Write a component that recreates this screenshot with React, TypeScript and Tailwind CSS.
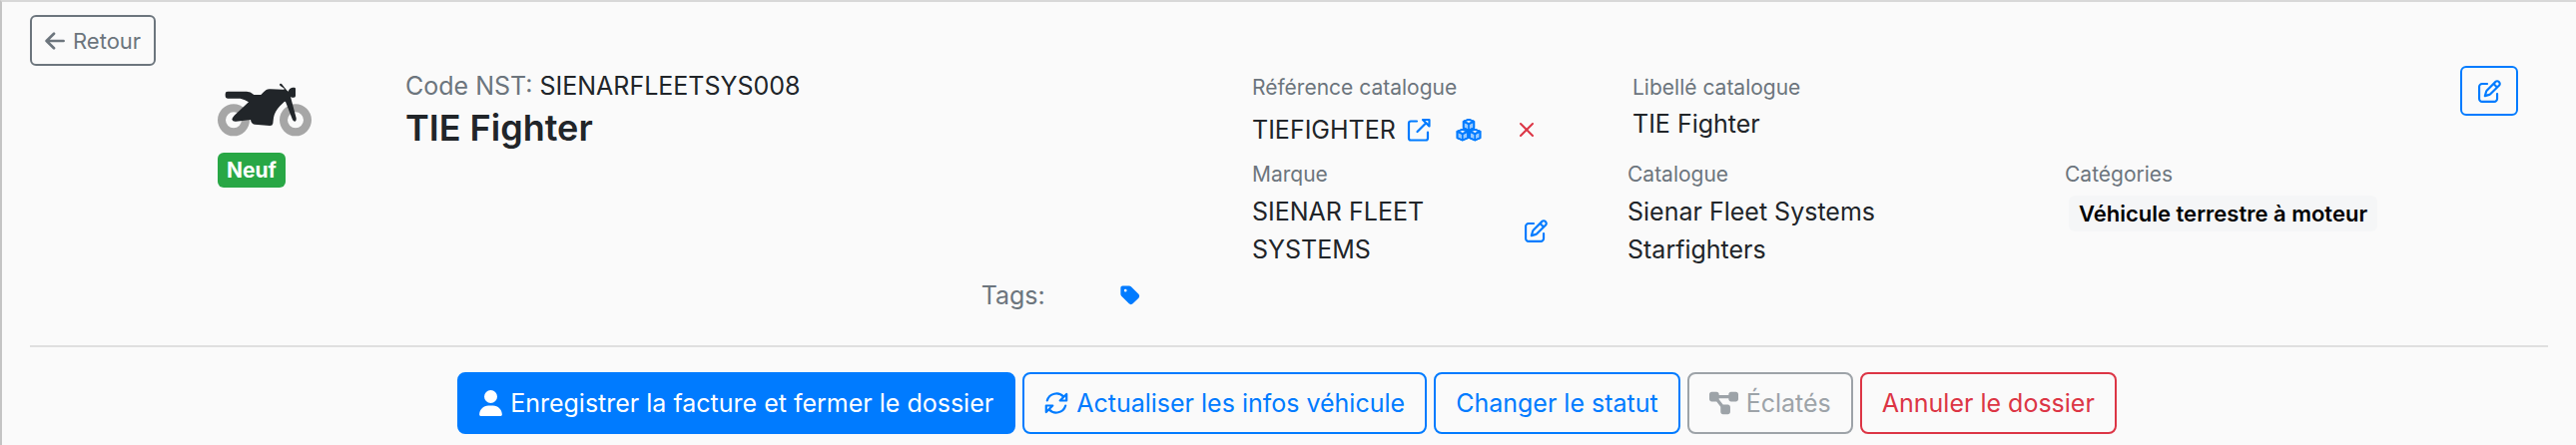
import type { ReactNode } from "react";
import { FaDiagramProject, FaRegPenToSquare, FaTag, FaUser } from "react-icons/fa6";

function ArrowLeftIcon() {
  return (
    <svg viewBox="0 0 20 18" className="h-[18px] w-5" fill="none" stroke="currentColor" strokeWidth="2.7" strokeLinecap="round" strokeLinejoin="round" aria-hidden="true">
      <path d="M9 1.8 1.6 9 9 16.2M2 9h16.6" />
    </svg>
  );
}

function ExternalLinkIcon() {
  return (
    <svg viewBox="0 0 24 24" className="size-6" fill="none" stroke="currentColor" strokeWidth="2.2" strokeLinecap="round" strokeLinejoin="round" aria-hidden="true">
      <path d="M10 3.500H4Q2 3.500 2 5.500v15Q2 22.500 4 22.500H19q2 0 2-2V14.500" />
      <path d="M10.500 14 19 5.500M16 2h6.500v6.500Z" />
    </svg>
  );
}

function Cube({ x, y }: { x: number; y: number }) {
  return (
    <g transform={`translate(${x} ${y})`}>
      <path d="M0-5.200 5.300-3.200V3.200L0 5.600-5.300 3.200V-3.200Z" fill="#99caff" />
      <path d="M0-5.200 5.300-3.200 0-.9-5.300-3.200Z" fill="#e6f2ff" />
      <path d="M0-5.200 5.300-3.200V3.200L0 5.600-5.300 3.200V-3.200ZM-5.300-3.200 0-.9 5.300-3.200M0-.9V5.600" />
    </g>
  );
}

function CubesIcon() {
  return (
    <svg viewBox="0 0 26 24" className="h-6 w-[26px]" fill="none" stroke="currentColor" strokeWidth="1.700" strokeLinejoin="round" aria-hidden="true">
      <Cube x={13} y={7} />
      <Cube x={6.8} y={17} />
      <Cube x={19.2} y={17} />
    </svg>
  );
}

function CloseIcon() {
  return (
    <svg viewBox="0 0 16 16" className="size-4" fill="none" stroke="currentColor" strokeWidth="2" strokeLinecap="round" aria-hidden="true">
      <path d="m2 2 12 12M14 2 2 14" />
    </svg>
  );
}

function RefreshIcon() {
  return (
    <svg viewBox="0 0 24 24" className="size-6" fill="none" stroke="currentColor" strokeWidth="2.200" strokeLinecap="round" strokeLinejoin="round" aria-hidden="true">
      <path d="M2.800 9.500A9.600 9.600 0 0 1 19.300 5.800M22.200 3v6.500h-6.500Z" />
      <path d="M21.200 14.500A9.600 9.600 0 0 1 4.700 18.200M1.800 21v-6.500h6.500Z" />
    </svg>
  );
}

function MotorcycleIcon() {
  return (
    <svg viewBox="57 40 282 162" className="h-[54px] w-[94px]" role="img" aria-label="Moto">
      <g fill="none" stroke="#a6a6a6" strokeWidth="24">
        <circle cx="105" cy="152" r="36" />
        <circle cx="291" cy="152" r="36" />
      </g>
      <path
        fill="#212529"
        d="M87 66H144Q156 66 166 76L187 76Q196 66 203 61Q208 58 216 59L252 60Q257 61 258 58L244 48Q241 41 249 43L264 62L269 66Q272 56 282 54H288Q292 55 291 60V79Q291 84 286 84L280 84L276 82L293 146Q294 155 289 156Q285 156 282 151L261 97L258 96L244 110Q228 127 225 145L223 162Q222 169 214 169L168 165Q158 164 156 151L112 156Q102 157 100 150Q100 146 107 138L150 98Q140 90 125 87H87Q80 87 80 80V73Q80 66 87 66Z"
      />
    </svg>
  );
}

function Label({ children }: { children: ReactNode }) {
  return <dt className="mb-px text-[21px] leading-8 text-[#6c757d]">{children}</dt>;
}

const action =
  "flex h-[62px] items-center gap-2 rounded-lg border-2 px-5 text-[25px] whitespace-nowrap";

export default function App() {
  return (
    <main className="min-h-screen border-t-2 border-l-2 border-t-[#d8d8d8] border-l-[#c4c4c4] bg-[#fafafa] pt-[13px] pb-[11px] font-['Inter','Liberation_Sans',sans-serif] text-[25px] leading-[38px] text-[#212529]">
      <div className="px-7">
        <button type="button" className="flex h-[51px] items-center gap-2 rounded-md border-2 border-[#6c757d] px-[13px] text-[22px] text-[#6c757d]">
          <ArrowLeftIcon />
          Retour
        </button>
      </div>

      <section className="grid grid-cols-[188fr_848fr_1210fr_58px] pr-[58px] pl-[216px]">
        <div className="flex flex-col items-start gap-4 pt-[17px]">
          <MotorcycleIcon />
          <span className="rounded-md bg-[#28a745] px-[9px] text-[21px] leading-[35px] font-bold text-white">Neuf</span>
        </div>

        <div className="pt-px">
          <p>
            <span className="text-[#6c757d]">Code NST:</span> SIENARFLEETSYS008
          </p>
          <h1 className="text-4xl leading-[46px] font-semibold">TIE Fighter</h1>
          <div className="mt-[126px] flex items-center gap-[74px] pl-[68%] text-[#6c757d]">
            Tags:
            <button type="button" aria-label="Modifier les tags" className="text-[#007bff]">
              <FaTag className="size-[22px]" />
            </button>
          </div>
        </div>

        <dl className="grid grid-cols-[376fr_438fr_396fr] content-start gap-y-1 pt-[6px]">
          <div>
            <Label>Référence catalogue</Label>
            <dd className="flex h-[50px] items-center">
              TIEFIGHTER
              <a href="#catalogue" aria-label="Ouvrir la fiche catalogue" className="ml-[11px] text-[#007bff]">
                <ExternalLinkIcon />
              </a>
              <button type="button" aria-label="Voir les pièces" className="ml-[25px] text-[#007bff]">
                <CubesIcon />
              </button>
              <button type="button" aria-label="Retirer la référence" className="ml-[37px] text-[#dc3545]">
                <CloseIcon />
              </button>
            </dd>
          </div>
          <div className="col-span-2 pl-[5px]">
            <Label>Libellé catalogue</Label>
            <dd>TIE Fighter</dd>
          </div>
          <div>
            <Label>Marque</Label>
            <dd className="flex items-center pt-px pr-20">
              <span className="flex-1 pr-16">SIENAR FLEET SYSTEMS</span>
              <button type="button" aria-label="Modifier la marque" className="text-[#007bff]">
                <FaRegPenToSquare className="size-[23px]" />
              </button>
            </dd>
          </div>
          <div>
            <Label>Catalogue</Label>
            <dd className="pt-px pr-40">Sienar Fleet Systems Starfighters</dd>
          </div>
          <div>
            <Label>Catégories</Label>
            <dd className="flex pt-1 pl-1">
              <span className="rounded-md bg-[#f5f6f7] px-[10px] text-[22px] leading-9 font-semibold whitespace-nowrap text-black">
                Véhicule terrestre à moteur
              </span>
            </dd>
          </div>
        </dl>

        <button type="button" aria-label="Modifier le véhicule" className="flex h-[50px] items-center justify-center rounded-md border-2 border-[#007bff] text-[#007bff]">
          <FaRegPenToSquare className="size-[23px]" />
        </button>
      </section>

      <hr className="mt-[31px] mr-7 ml-7 border-t-2 border-[#dfdfdf]" />

      <div className="mt-[25px] flex justify-center gap-[7px] pr-1">
        <button type="button" className={`${action} border-[#007bff] bg-[#007bff] text-white`}>
          <FaUser className="h-[26px] w-[23px]" />
          Enregistrer la facture et fermer le dossier
        </button>
        <button type="button" className={`${action} border-[#007bff] text-[#007bff]`}>
          <RefreshIcon />
          Actualiser les infos véhicule
        </button>
        <button type="button" className={`${action} border-[#007bff] text-[#007bff]`}>Changer le statut</button>
        <button type="button" disabled className={`${action} border-[#6c757d] text-[#6c757d] opacity-65`}>
          <FaDiagramProject className="h-[26px] w-[29px]" />
          Éclatés
        </button>
        <button type="button" className={`${action} border-[#dc3545] text-[#dc3545]`}>Annuler le dossier</button>
      </div>
    </main>
  );
}
